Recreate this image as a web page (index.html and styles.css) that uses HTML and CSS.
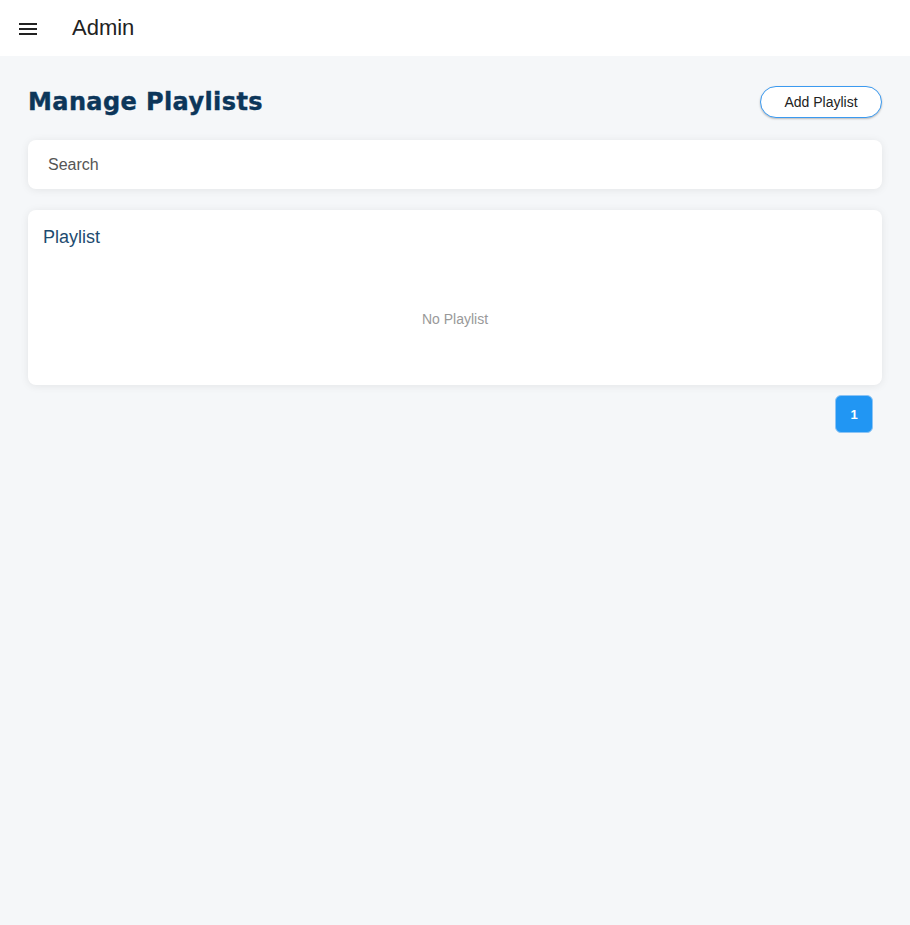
FILE: index.html
```html
<!DOCTYPE html>
<html>
<head>
<meta charset="utf-8">
<link rel="stylesheet" href="styles.css">
</head>
<body>
<header class="topbar">
  <button class="menu-btn" aria-label="menu">
    <svg width="18" height="14" viewBox="0 0 18 14"><rect x="0" y="1" width="18" height="2" fill="#222"/><rect x="0" y="6" width="18" height="2" fill="#222"/><rect x="0" y="11" width="18" height="2" fill="#222"/></svg>
  </button>
  <span class="brand">Admin</span>
</header>
<main class="content">
  <div class="page-head">
    <h1 class="page-title">Manage Playlists</h1>
    <button class="add-btn">Add Playlist</button>
  </div>
  <div class="card search-card">
    <span class="search-placeholder">Search</span>
  </div>
  <section class="card list-card">
    <h2 class="list-title">Playlist</h2>
    <div class="empty">No Playlist</div>
  </section>
  <div class="pager">
    <button class="page-btn">1</button>
  </div>
</main>
</body>
</html>
```
FILE: styles.css
```css
* { box-sizing: border-box; }
html, body { margin: 0; padding: 0; }
body {
  font-family: "Liberation Sans", Arial, sans-serif;
  background: #f5f7f9;
  width: 910px;
  height: 925px;
}
.topbar {
  height: 56px;
  background: #fff;
  display: flex;
  align-items: center;
  padding-left: 19px;
}
.menu-btn {
  border: 0;
  background: none;
  padding: 0;
  width: 18px;
  height: 14px;
  display: flex;
  margin-top: 1px;
}
.brand {
  margin-left: 35px;
  font-size: 22px;
  color: #222;
}
.content {
  padding: 30px 28px 0 28px;
}
.page-head {
  display: flex;
  justify-content: space-between;
  align-items: center;
  height: 32px;
  margin-bottom: 22px;
}
.page-title {
  margin: 0;
  font-family: "DejaVu Sans", "Liberation Sans", sans-serif;
  font-size: 24px;
  font-weight: 700;
  letter-spacing: 0.4px;
  color: #0c365a;
  line-height: 32px;
  -webkit-text-stroke: 0.4px #0c365a;
}
.add-btn {
  width: 122px;
  height: 32px;
  border-radius: 16px;
  border: 1px solid #3b9af0;
  background: #fff;
  box-shadow: 0 1px 2px rgba(0,0,0,0.25);
  font-family: "Liberation Sans", Arial, sans-serif;
  font-size: 14px;
  color: #222;
  padding: 0;
}
.card {
  background: #fff;
  border-radius: 8px;
  box-shadow: 0 1px 8px rgba(0,0,0,0.08);
}
.search-card {
  height: 49px;
  display: flex;
  align-items: center;
  padding-left: 20px;
}
.search-placeholder {
  font-size: 16px;
  color: #555;
}
.list-card {
  margin-top: 21px;
  height: 175px;
  padding: 17px 15px 0;
}
.list-title {
  margin: 0;
  font-size: 18px;
  font-weight: 400;
  color: #1d4b70;
  line-height: 20px;
}
.empty {
  text-align: center;
  font-size: 14px;
  color: #999;
  margin-top: 64px;
}
.pager {
  display: flex;
  justify-content: flex-end;
  padding-right: 9px;
  margin-top: 10px;
}
.page-btn {
  width: 38px;
  height: 38px;
  border-radius: 6px;
  border: 1px solid #8cc4f5;
  background: #2196f3;
  color: #fff;
  font-family: "Liberation Sans", Arial, sans-serif;
  font-size: 13px;
  font-weight: 700;
  padding: 0;
}
```
